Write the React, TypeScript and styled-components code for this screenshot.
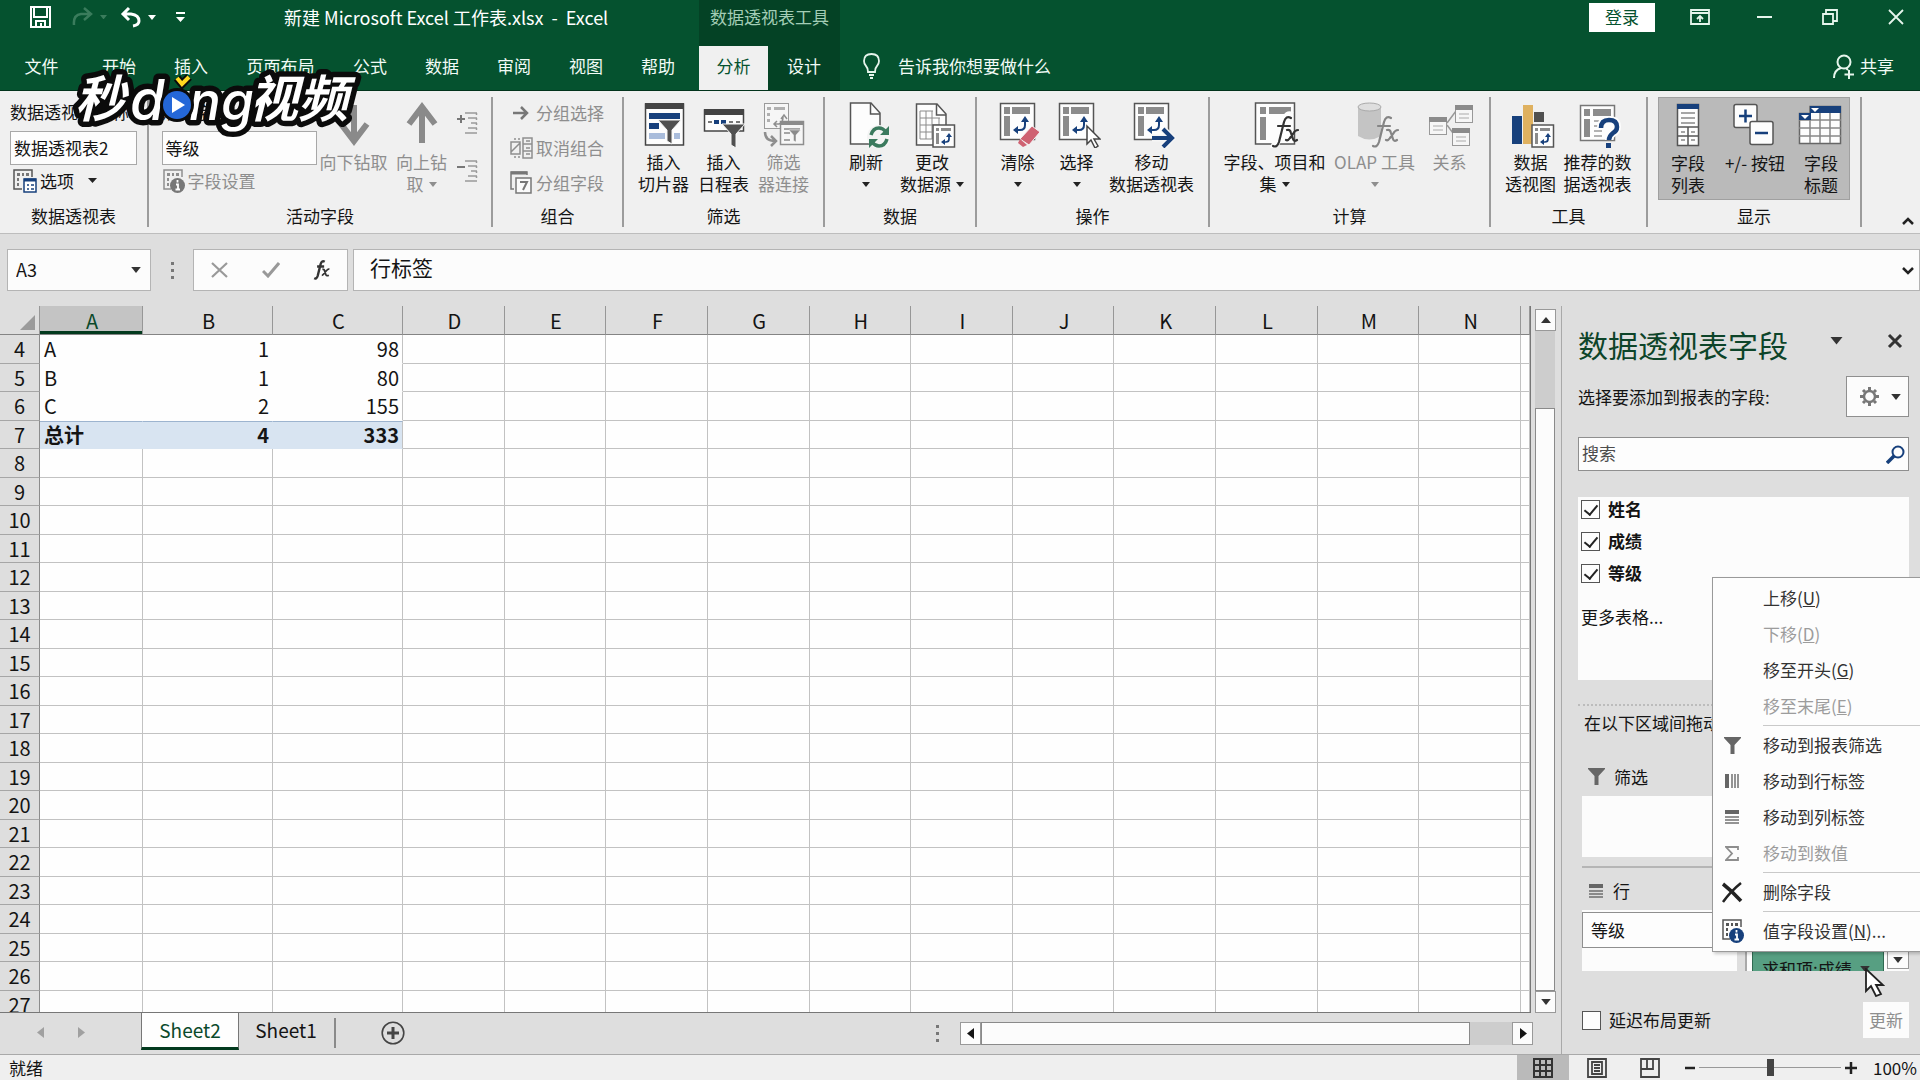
import React from "react";
import styled, { createGlobalStyle, css } from "styled-components";

const GREEN = "#05522f";
const BLUE = "#17407c";
const INK = "#141414";
const MUTED = "#8e8e8e";

const Global = createGlobalStyle`
  * { box-sizing: border-box; }
  body { margin: 0; overflow: hidden; }
  body, button, input, table {
    font-family: "Noto Sans CJK SC", "Noto Sans", sans-serif;
    font-size: 17px;
    line-height: 22px;
    color: ${INK};
  }
  button { background: none; border: 0; padding: 0; margin: 0; white-space: nowrap; }
  input { margin: 0; min-width: 0; }
  svg { display: block; flex: none; }
`;

const Page = styled.div`
  height: 100vh;
  display: flex;
  flex-direction: column;
  background: #dedede;
  position: relative;
  overflow: hidden;
`;

/* ---------- title bar and tabs ---------- */

const Header = styled.header`
  background: ${GREEN};
  color: #f2fbf6;
  border-bottom: 1px solid #02331c;
  flex: none;
`;

const HeaderRow = styled.div<{ $h: number }>`
  display: grid;
  grid-template-columns: 699px 141px 1fr;
  height: ${(p) => p.$h}px;
`;

const QuickBar = styled.div`
  display: flex;
  align-items: center;
  height: 34px;
  padding-left: 30px;
`;

const QuickButton = styled.button<{ $w: number }>`
  width: ${(p) => p.$w}px;
  display: flex;
  align-items: center;
  gap: 7px;
`;

const DocTitle = styled.h1`
  margin: 0 0 0 88px;
  font-size: 18px;
  font-weight: 400;
  white-space: pre;
  color: #fff;
`;

const ContextTitle = styled.div`
  background: #044225;
  color: #a3cdb6;
  text-align: center;
  line-height: 34px;
`;

const WindowButtons = styled.div`
  display: flex;
  align-items: center;
  justify-content: flex-end;
  height: 34px;
`;

const SignIn = styled.button`
  width: 66px;
  height: 29px;
  background: #fff;
  color: ${GREEN};
  margin-right: 12px;
`;

const WinButton = styled.button`
  width: 65px;
  height: 34px;
  display: flex;
  align-items: center;
  justify-content: center;
  &:last-child {
    width: 58px;
    padding-left: 10px;
  }
`;

const Tabs = styled.nav`
  display: flex;
`;

const Tab = styled.button<{ $w?: number; $active?: boolean }>`
  width: ${(p) => p.$w ?? 72}px;
  height: 100%;
  padding-bottom: 4px;
  color: #f2fbf6;
  ${(p) => p.$active && css`
    background: #f0f0f0;
    color: ${GREEN};
  `}
`;

const ContextTabs = styled(Tabs)`
  background: #044225;
`;

const TabsRight = styled.div`
  display: flex;
  align-items: center;
  justify-content: space-between;
  padding: 0 26px 4px 23px;
`;

const IconTextButton = styled.button<{ $gap: number }>`
  display: flex;
  align-items: center;
  gap: ${(p) => p.$gap}px;
  color: #f2fbf6;
`;

/* ---------- ribbon ---------- */

const Ribbon = styled.div`
  flex: none;
  display: flex;
  height: 143px;
  padding: 6px 0;
  background: #f0f0f0;
  border-bottom: 1px solid #bdbdbd;
`;

const Group = styled.section<{ $w: number }>`
  width: ${(p) => p.$w}px;
  flex: none;
  display: flex;
  flex-direction: column;
  align-items: center;
  border-right: 2px solid #9c9c9c;
`;

const GroupBody = styled.div<{ $indent?: number }>`
  height: 108px;
  padding-left: ${(p) => p.$indent ?? 0}px;
  display: flex;
`;

const GroupName = styled.h2`
  margin: 0;
  font-size: 17px;
  font-weight: 400;
  line-height: 22px;
`;

const BigButton = styled.button<{ $w: number; $disabled?: boolean }>`
  width: ${(p) => p.$w}px;
  height: 102px;
  padding-top: 5px;
  display: flex;
  flex-direction: column;
  align-items: center;
  justify-content: flex-start;
  color: ${(p) => (p.$disabled ? MUTED : INK)};
  svg.glyph { margin-bottom: 3px; }
`;

const LabelLine = styled.span`
  height: 22px;
  display: flex;
  align-items: center;
  gap: 5px;
`;

const Stack = styled.div<{ $w: number }>`
  width: ${(p) => p.$w}px;
  display: flex;
  flex-direction: column;
`;

const FieldLabel = styled.label`
  height: 34px;
  line-height: 30px;
  white-space: nowrap;
`;

const FieldInput = styled.input`
  width: 100%;
  height: 34px;
  border: 1px solid #a8a8a8;
  background: #fdfdfd;
  padding: 0 3px 2px;
`;

const SmallButton = styled.button<{ $disabled?: boolean }>`
  height: 35px;
  padding-bottom: 4px;
  display: flex;
  align-items: center;
  gap: 3px;
  color: ${(p) => (p.$disabled ? MUTED : INK)};
`;

const OutlineStack = styled(Stack)`
  padding-top: 15px;
  gap: 26px;
  margin-left: 4px;
`;

const ToggleBox = styled.div`
  display: flex;
  height: 103px;
  width: 192px;
  background: #bababa;
  border: 1px solid #a0a0a0;
`;

const CollapseRibbon = styled.div`
  flex: 1;
  display: flex;
  align-items: flex-end;
  justify-content: flex-end;
  padding: 0 5px 2px 0;
`;

/* ---------- formula bar ---------- */

const FormulaBar = styled.div`
  flex: none;
  display: flex;
  align-items: flex-start;
  padding: 15px 0 0 7px;
  height: 72px;
`;

const Box = styled.div<{ $w?: number }>`
  height: 42px;
  ${(p) => (p.$w ? `width: ${p.$w}px; flex: none;` : "flex: 1; margin-left: 5px;")}
  display: flex;
  align-items: center;
  background: #fcfcfc;
  border: 1px solid #b4b4b4;
`;

const NameInput = styled.input`
  flex: 1;
  border: 0;
  background: none;
  padding: 0 8px 2px;
  font-size: 18px;
`;

const BarButton = styled.button`
  flex: 1;
  display: flex;
  justify-content: center;
`;

const FormulaInput = styled(NameInput)`
  padding: 0 16px 6px;
  font-size: 21px;
  line-height: 28px;
`;

const DropButton = styled.button`
  width: 28px;
  height: 100%;
  display: flex;
  align-items: center;
  justify-content: center;
`;

const ExpandButton = styled(DropButton)`
  width: 22px;
`;

const Grip = styled.span<{ $w: number; $h: number }>`
  width: ${(p) => p.$w}px;
  height: ${(p) => p.$h}px;
  flex: none;
  display: flex;
  flex-direction: column;
  align-items: center;
  justify-content: center;
  gap: 4px;
  i { width: 3px; height: 3px; background: #777; }
`;

/* ---------- sheet ---------- */

const Main = styled.main`
  flex: 1;
  min-height: 0;
  display: flex;
`;

const SheetArea = styled.section`
  flex: 1;
  min-width: 0;
  display: flex;
  flex-direction: column;
`;

const SheetTop = styled.div`
  flex: 1;
  min-height: 0;
  display: flex;
`;

const GridFrame = styled.div`
  flex: 1;
  min-width: 0;
  overflow: hidden;
  border-bottom: 1px solid #777;
`;

const Sheet = styled.table`
  width: 100%;
  table-layout: fixed;
  border-spacing: 0;
  border-collapse: separate;
  th, td { padding: 0; font-size: 20px; line-height: 26px; }
`;

const ColHead = styled.th<{ $selected?: boolean }>`
  height: 29px;
  font-weight: 400;
  border-right: 1px solid #979797;
  border-bottom: 1px solid #848484;
  && { padding: 2px 0 0 2px; }
  ${(p) => p.$selected && css`
    background: #c4c4c4;
    color: #0b4a2b;
    box-shadow: inset 0 -3px 0 #033a1e;
  `}
`;

const Corner = styled.th`
  border-right: 1px solid #979797;
  border-bottom: 1px solid #848484;
  svg { margin: 4px 0 0 20px; }
`;

const Row = styled.tr<{ $tall: boolean }>`
  height: ${(p) => (p.$tall ? 29 : 28)}px;
`;

const RowHead = styled.th`
  font-weight: 400;
  border-right: 1px solid #8c8c8c;
  border-bottom: 1px solid #a6a6a6;
`;

const Cell = styled.td<{ $plain?: boolean; $total?: boolean; $num?: boolean; $edge?: boolean }>`
  background: #fefefe;
  border-right: 1px solid ${(p) => ((p.$plain || p.$total) && !p.$edge ? "transparent" : "#c2c2c2")};
  border-bottom: 1px solid ${(p) => (p.$plain || p.$total ? "transparent" : "#c2c2c2")};
  text-align: ${(p) => (p.$num ? "right" : "left")};
  && { padding: 0 3px 0 4px; }
  ${(p) => p.$total && css`
    background: #d8e4f1;
    border-top: 1px solid #9db4cf;
    font-weight: 700;
  `}
`;

const VScroll = styled.div`
  width: 31px;
  flex: none;
  display: flex;
  flex-direction: column;
  padding: 3px 6px 0 4px;
  border-left: 1px solid #777;
`;

const ScrollButton = styled.button<{ $w: number; $h: number }>`
  flex: none;
  width: ${(p) => p.$w}px;
  height: ${(p) => p.$h}px;
  background: #fcfcfc;
  border: 1px solid #999;
  display: flex;
  align-items: center;
  justify-content: center;
`;

const Track = styled.div<{ $size: number }>`
  flex: 0 0 ${(p) => p.$size}px;
  background: #cdcdcd;
`;

const Thumb = styled.div`
  flex: 1;
  background: #fcfcfc;
  border: 1px solid #8a8a8a;
`;

const SheetTabs = styled.div`
  flex: none;
  height: 41px;
  display: flex;
  align-items: flex-start;
`;

const SheetNav = styled.div`
  width: 141px;
  height: 38px;
  padding-left: 37px;
  display: flex;
  align-items: center;
  gap: 32px;
`;

const SheetTab = styled.button<{ $active?: boolean }>`
  font-size: 19px;
  height: 37px;
  padding-bottom: ${(p) => (p.$active ? 0 : 3)}px;
  width: ${(p) => (p.$active ? 98 : 94)}px;
  ${(p) => p.$active && css`
    background: #fefefe;
    color: #0b4a2b;
    border: 1px solid #777;
    border-top: 0;
    border-bottom: 3px solid #033a1e;
  `}
`;

const TabDivider = styled.i`
  width: 2px;
  height: 30px;
  margin: 5px 45px 0 1px;
  background: #8a8a8a;
`;

const AddSheet = styled.button`
  height: 40px;
`;

const HScroll = styled.div`
  margin-left: auto;
  display: flex;
  width: 647px;
  height: 40px;
  padding: 9px 28px 8px 0;
`;

/* ---------- field panel ---------- */

const Panel = styled.aside`
  width: 359px;
  flex: none;
  position: relative;
  padding: 0 11px 0 16px;
  border-left: 1px solid #a9a9a9;
  display: flex;
  flex-direction: column;
`;

const PanelHead = styled.div`
  height: 70px;
  display: flex;
  align-items: center;
  padding-top: 6px;
`;

const PanelTitle = styled.h2`
  margin: 0;
  flex: 1;
  font-size: 30px;
  line-height: 40px;
  font-weight: 400;
  color: #0d4429;
`;

const PanelIconButton = styled.button<{ $mr: number }>`
  margin-right: ${(p) => p.$mr}px;
  margin-bottom: 6px;
`;

const Choose = styled.div`
  display: flex;
  align-items: center;
  justify-content: space-between;
  height: 41px;
`;

const GearButton = styled.button`
  width: 63px;
  height: 41px;
  padding-left: 6px;
  background: #fcfcfc;
  border: 1px solid #8f8f8f;
  display: flex;
  align-items: center;
  justify-content: center;
  gap: 12px;
`;

const Search = styled.div`
  margin-top: 20px;
  height: 34px;
  border: 1px solid #8f8f8f;
  background: #fdfdfd;
  display: flex;
  align-items: center;
  padding-right: 3px;
  input {
    flex: 1;
    border: 0;
    background: none;
    padding: 0 3px 2px;
    &::placeholder { color: #4c4c4c; opacity: 1; }
  }
`;

const FieldList = styled.div`
  margin-top: 26px;
  height: 183px;
  background: #fcfcfc;
  padding: 0 3px;
`;

const CheckLabel = styled.label<{ $bold?: boolean }>`
  display: flex;
  align-items: center;
  gap: 8px;
  height: ${(p) => (p.$bold ? 32 : 36)}px;
  padding-bottom: ${(p) => (p.$bold ? 8 : 0)}px;
  font-weight: ${(p) => (p.$bold ? 700 : 400)};
`;

const Check = styled.input`
  appearance: none;
  width: 19px;
  height: 19px;
  border: 1px solid #555;
  background: #fdfdfd;
  display: flex;
  justify-content: center;
  &:checked::after {
    content: "";
    width: 6px;
    height: 11px;
    margin-top: 1px;
    border: solid #222;
    border-width: 0 2px 2px 0;
    transform: rotate(40deg);
  }
`;

const MoreTables = styled.a`
  display: block;
  margin-top: 13px;
  color: ${INK};
  text-decoration: none;
`;

const DragHint = styled.p`
  margin: 24px 0 0;
  padding: 6px 6px 0;
  border-top: 2px dotted #bcbcbc;
`;

const Areas = styled.div`
  margin: 27px 0 0 4px;
  display: grid;
  grid-template-columns: 155px 1fr;
  column-gap: 8px;
`;

const AreaTitle = styled.h3`
  margin: 0;
  height: 35px;
  display: flex;
  align-items: center;
  gap: 9px;
  padding-left: 6px;
  font-size: 17px;
  font-weight: 400;
  padding-bottom: 4px;
`;

const AreaBox = styled.div`
  height: 61px;
  background: #fcfcfc;
  overflow: hidden;
`;

const AreaRule = styled.hr`
  grid-column: 1 / -1;
  width: 100%;
  height: 2px;
  margin: 9px 0 7px;
  border: 0;
  background: #b5b5b5;
`;

const ValueBox = styled(AreaBox)`
  border-left: 2px solid #a9a9a9;
  padding: 41px 0 0 5px;
  display: flex;
  justify-content: space-between;
`;

const RowItem = styled.button`
  width: 100%;
  height: 36px;
  margin-top: 2px;
  padding: 0 8px;
  border: 1px solid #8f8f8f;
  background: #fdfdfd;
  display: flex;
  align-items: center;
  justify-content: space-between;
`;

const ValueItem = styled.button`
  width: 132px;
  height: 38px;
  padding: 0 13px 2px 9px;
  flex: none;
  background: #579f82;
  border: 1px solid #2f6a51;
  display: flex;
  align-items: center;
  justify-content: space-between;
`;

const PanelFoot = styled.div`
  margin-top: 31px;
  padding-left: 4px;
  display: flex;
  align-items: center;
  justify-content: space-between;
`;

const UpdateButton = styled.button`
  width: 46px;
  height: 36px;
  background: #fcfcfc;
  color: ${MUTED};
`;

const Menu = styled.div`
  position: absolute;
  right: 0;
  bottom: 102px;
  width: 208px;
  padding: 2px 0;
  background: #fdfdfd;
  border: 1px solid #9a9a9a;
  border-right: 0;
  box-shadow: 2px 2px 3px rgba(0, 0, 0, 0.2);
`;

const MenuItem = styled.button<{ $disabled?: boolean }>`
  width: 100%;
  height: 36px;
  display: grid;
  grid-template-columns: 38px 1fr;
  column-gap: 12px;
  align-items: center;
  text-align: left;
  color: ${(p) => (p.$disabled ? "#9c9c9c" : "#333")};
  svg { justify-self: center; }
`;

const MenuRule = styled.hr`
  height: 1px;
  margin: 1px 0 1px 50px;
  border: 0;
  background: #c9c9c9;
`;

const Pointer = styled.svg`
  position: absolute;
  right: 35px;
  bottom: 57px;
`;

/* ---------- status bar ---------- */

const Status = styled.footer`
  flex: none;
  height: 26px;
  display: flex;
  align-items: center;
  padding-left: 9px;
  background: #efefef;
  border-top: 1px solid #a9a9a9;
`;

const StatusText = styled.span`
  flex: 1;
`;

const ViewButton = styled.button<{ $on?: boolean; $w: number }>`
  width: ${(p) => p.$w}px;
  height: 26px;
  display: flex;
  align-items: center;
  justify-content: center;
  background: ${(p) => (p.$on ? "#bababa" : "none")};
`;

const Zoom = styled.div`
  display: flex;
  align-items: center;
  width: 235px;
  gap: 4px;
  margin-left: 10px;
`;

const Slider = styled.input`
  appearance: none;
  width: 142px;
  height: 20px;
  background: linear-gradient(#999, #999) center / 100% 1px no-repeat;
  &::-webkit-slider-thumb {
    appearance: none;
    width: 7px;
    height: 17px;
    background: #444;
  }
`;

const ZoomValue = styled.span`
  margin-left: 12px;
`;

const Watermark = styled.svg`
  position: absolute;
  left: 60px;
  top: 64px;
`;

/* ---------- drawings ---------- */

const Down = ({ s = 8, c = "#333" }: { s?: number; c?: string }) => (
  <svg width={s} height={s / 2 + 1} viewBox="0 0 8 5"><path d="M0 0H8L4 5Z" fill={c} /></svg>
);

const Glyph = ({ children }: { children: React.ReactNode }) => (
  <svg className="glyph" width="48" height="46" viewBox="0 0 48 46" fill="none">{children}</svg>
);

const PivotPage = () => (
  <>
    <rect x="6.5" y="1.5" width="34" height="36" fill="#fdfdfd" stroke="#555" strokeWidth="1.5" />
    <path d="M10 5h6v7h-6zM18 5h18v7H18zM10 14h6v20h-6z" fill="#8b8b8b" />
    <path d="M31 18v5q0 5-5 5h-4" stroke={BLUE} strokeWidth="2" />
    <path d="M27 20l4-6 4 6zM24 24v8l-5-4z" fill={BLUE} />
  </>
);

const MiniPivot = () => (
  <>
    <rect x="25" y="23" width="21.5" height="22" fill="#fdfdfd" stroke="#555" strokeWidth="1.5" />
    <path d="M28 26h3v3h-3zM33 26h10v3H33zM28 31h3v11h-3z" fill="#8b8b8b" />
    <path d="M41 34v3q0 3-3 3h-2" stroke={BLUE} strokeWidth="1.7" />
    <path d="M38 35l3-4 3 4zM37 37v6l-4-3z" fill={BLUE} />
  </>
);

const Funnel = ({ x, y, k = 1, c = "#505050" }: { x: number; y: number; k?: number; c?: string }) => (
  <path transform={`translate(${x} ${y}) scale(${k})`} d="M0 0H23L14 10V24L9 21V10Z" fill={c} stroke="#f5f5f5" />
);

const Fx = ({ c }: { c: string }) => (
  <path
    d="M40 16q-5-3-7 4l-5 20q-2 6-6 4M27 24h12M36 28q3-1 4 3l2 6q1 3 4 1M47 28q-3 0-5 4l-3 4q-2 3-4 2"
    stroke={c}
    strokeWidth="2.2"
    strokeLinecap="round"
  />
);

const Info = ({ c, o }: { c: string; o: string }) => (
  <svg width="23" height="24" viewBox="0 0 23 24" fill="none">
    <path d="M9 20H2V1h18v7" stroke={o} strokeWidth="1.5" />
    <path d="M5 4h3v3H5zM10 4h2v3h-2zM14 4h3v3h-3zM5 9h2v3H5zM5 14h2v3H5z" fill={o} />
    <circle cx="15.500" cy="16.500" r="7.500" fill={c} />
    <path d="M15.500 11v2.500M14 15.500h2v5M13.500 20.500h4.500" stroke="#fff" strokeWidth="1.800" />
  </svg>
);

const Lines = ({ turn, c = "#666" }: { turn?: boolean; c?: string }) => (
  <svg width="16" height="16" viewBox="0 0 16 16">
    <g transform={turn ? "rotate(-90 8 8)" : undefined} fill={c}>
      <path d="M1 1h14v4H1z" />
      <path d="M1 7h14v2H1zM1 10h14v2H1zM1 13h14v2H1z" opacity=".7" />
    </g>
  </svg>
);

const SmallFunnel = () => (
  <svg width="17" height="17" viewBox="0 0 17 17"><path d="M0 0H17V1L10.500 8V17H6.500V8L0 1Z" fill="#666" /></svg>
);

const Rel = ({ x, y }: { x: number; y: number }) => (
  <g transform={`translate(${x} ${y})`}>
    <rect x=".5" y=".5" width="17" height="17" fill="#f6f6f6" stroke="#999" />
    <path d="M0 0h18v5H0z" fill="#8b8b8b" />
    <path d="M4 9h10M4 13h10" stroke="#aaa" />
  </g>
);

const Outline = ({ plus }: { plus?: boolean }) => (
  <svg width="22" height="22" viewBox="0 0 22 22" stroke="#999" strokeWidth="1.500" fill="none">
    <path d={plus ? "M0 7h8M4 3v8" : "M0 7h8"} stroke="#777" strokeWidth="2" />
    <path d="M8 1h12M11 6h9M14 11h6M11 16h9M8 21h12" />
    <path d="M19.500 1v20" strokeDasharray="2 3" />
  </svg>
);

const BigArrow = ({ down }: { down?: boolean }) => (
  <Glyph>
    <g transform={down ? "rotate(180 24 22)" : undefined}>
      <path d="M24 41V6M11 22L24 5l13 17" stroke="#8a8a8a" strokeWidth="6" />
    </g>
  </Glyph>
);

const Logo = () => {
  const ink = {
    fill: "#fff",
    stroke: "#0b0b0b",
    strokeWidth: 11,
    strokeLinejoin: "round" as const,
    paintOrder: "stroke",
    fontStyle: "italic",
  };
  const han = { ...ink, fontFamily: '"Noto Sans CJK SC", sans-serif', fontWeight: 700, fontSize: 50 };
  const latin = { ...ink, fontFamily: "Inter, sans-serif", fontWeight: 500 };
  return (
    <Watermark width="310" height="84" viewBox="0 0 310 84" aria-hidden="true">
      <text x="15" y="53" {...han}>秒</text>
      <text x="188" y="53" {...han}>视频</text>
      <text x="70" y="56" fontSize="56" {...latin}>d</text>
      <text x="129" y="56" fontSize="53" {...latin}>ng</text>
      <circle cx="117" cy="41" r="17" fill="#0b0b0b" />
      <circle cx="117" cy="41" r="14" fill="#2467d8" />
      <path d="M112 33v16l13-8z" fill="#fff" />
      <path d="M117 14l5 6 7-7" fill="none" stroke="#0b0b0b" strokeWidth="8" />
      <path d="M117 14l5 6 7-7" fill="none" stroke="#ffd91f" strokeWidth="4" />
    </Watermark>
  );
};

/* ---------- data ---------- */

const COLUMNS = "ABCDEFGHIJKLMN".split("");
const DATA: Record<number, string[]> = {
  4: ["A", "1", "98"],
  5: ["B", "1", "80"],
  6: ["C", "2", "155"],
  7: ["总计", "4", "333"],
};
const ROWS = Array.from({ length: 24 }, (_, i) => i + 4);

type BigProps = { w: number; lines: string[]; drop?: boolean; off?: boolean; icon: React.ReactNode };
const Big = ({ w, lines, drop, off, icon }: BigProps) => (
  <BigButton $w={w} $disabled={off} type="button">
    {icon}
    {lines.map((t, i) => (
      <LabelLine key={i}>
        {t}
        {drop && i === lines.length - 1 && <Down c={off ? MUTED : "#222"} />}
      </LabelLine>
    ))}
  </BigButton>
);

const RibbonBar = () => (
  <Ribbon>
    <Group $w={149}>
      <GroupBody>
        <Stack $w={127}>
          <FieldLabel htmlFor="pivotName">数据透视表名称:</FieldLabel>
          <FieldInput id="pivotName" defaultValue="数据透视表2" />
          <SmallButton type="button">
            <svg width="27" height="24" viewBox="-3 0 27 24" fill="none">
              <path d="M9 20H1V1h18v7" stroke="#555" strokeWidth="1.500" />
              <path d="M4 4h3v3H4zM9 4h2v3H9zM13 4h3v3h-3zM4 9h2v3H4zM4 14h2v3H4z" fill="#777" />
              <rect x="11" y="10" width="12" height="13" fill="#fff" stroke={BLUE} strokeWidth="1.500" />
              <path d="M11 11h12" stroke={BLUE} strokeWidth="3" />
              <path d="M14 16h2M18 16h3M14 20h2M18 20h3" stroke={BLUE} strokeWidth="1.500" />
            </svg>
            选项
            <svg width="20" height="6" viewBox="0 0 20 6"><path d="M11 0h9l-4.500 5z" fill="#222" /></svg>
          </SmallButton>
        </Stack>
      </GroupBody>
      <GroupName>数据透视表</GroupName>
    </Group>

    <Group $w={344}>
      <GroupBody>
        <Stack $w={155}>
          <FieldLabel htmlFor="activeField">活动字段:</FieldLabel>
          <FieldInput id="activeField" defaultValue="等级" />
          <SmallButton type="button" $disabled>
            <Info c="#777" o="#8e8e8e" />
            字段设置
          </SmallButton>
        </Stack>
        <Big w={74} off lines={["向下钻取"]} icon={<BigArrow down />} />
        <Big w={62} off drop lines={["向上钻", "取"]} icon={<BigArrow />} />
        <OutlineStack $w={22}>
          <Outline plus />
          <Outline />
        </OutlineStack>
      </GroupBody>
      <GroupName>活动字段</GroupName>
    </Group>

    <Group $w={131}>
      <GroupBody>
        <Stack $w={95}>
          <SmallButton type="button" $disabled>
            <svg width="23" height="22" viewBox="0 0 23 22" fill="none"><path d="M3 11h14M11 5l6 6-6 6" stroke="#777" strokeWidth="2.500" /></svg>
            分组选择
          </SmallButton>
          <SmallButton type="button" $disabled>
            <svg width="23" height="22" viewBox="0 0 23 22" fill="none" stroke="#8e8e8e" strokeWidth="1.500">
              <path d="M1 5h9v12H1zM1 15L10 6" /><path d="M13 1h9v20h-9zM13 7h9M13 14h9M16 4h4M16 11h4M16 17h4" /><path d="M4 2h6M4 20h6" strokeDasharray="2 2" />
            </svg>
            取消组合
          </SmallButton>
          <SmallButton type="button" $disabled>
            <svg width="23" height="23" viewBox="0 0 23 23" fill="none" stroke="#777" strokeWidth="1.500">
              <path d="M4 18H1V1h16v3" /><path d="M1 2h16" strokeWidth="3" /><path d="M6 7h15v15H6z" fill="#fafafa" /><path d="M10 11h7l-4 8" strokeWidth="2" />
            </svg>
            分组字段
          </SmallButton>
        </Stack>
      </GroupBody>
      <GroupName>组合</GroupName>
    </Group>

    <Group $w={201}>
      <GroupBody>
        <Big w={60} lines={["插入", "切片器"]} icon={
          <Glyph>
            <rect x="5.500" y="2" width="38" height="41" fill="#fdfdfd" stroke="#444" strokeWidth="1.500" />
            <path d="M5 1h39v6H5z" fill="#444" />
            <path d="M9 11h31v6H9zM9 21h10v6H9z" fill={BLUE} />
            <path d="M9 31h16v6H9zM34 31h6v6h-6z" fill="#a9bcdb" />
            <Funnel x={18} y={18} />
          </Glyph>
        } />
        <Big w={60} lines={["插入", "日程表"]} icon={
          <Glyph>
            <rect x="4.500" y="8" width="39" height="21" fill="#fdfdfd" stroke="#444" strokeWidth="1.500" />
            <path d="M4 7h40v6H4z" fill="#444" />
            <path d="M14 18h5v4h-5zM21 18h5v4h-5z" fill={BLUE} />
            <path d="M8 20h4M29 20h4M36 20h4" stroke="#777" strokeWidth="2" />
            <Funnel x={22} y={22} />
          </Glyph>
        } />
        <Big w={60} off lines={["筛选", "器连接"]} icon={
          <Glyph>
            <rect x="4.500" y="1.500" width="24" height="25" fill="#f6f6f6" stroke="#9a9a9a" />
            <path d="M7 5h4v3H7zM14 5h11v3H14zM7 11h3v3H7zM7 17h3v3H7z" fill="#b0b0b0" />
            <path d="M14 22h5q4-1 4-7M21 17l3-4 3 4M17 19l-3 3 3 3" stroke="#8e8e8e" strokeWidth="1.500" />
            <rect x="20.500" y="19.500" width="23" height="23" fill="#f6f6f6" stroke="#8e8e8e" strokeWidth="1.500" />
            <path d="M20 19h24v4H20z" fill="#8b8b8b" />
            <path d="M24 27h16M24 31h6M24 38h6" stroke="#a5a5a5" strokeWidth="2" />
            <Funnel x={29} y={28} k={0.5} c="#8b8b8b" />
            <path d="M5 30q0 9 10 9M11 34l5 5-5 5" stroke="#8e8e8e" strokeWidth="2.500" />
          </Glyph>
        } />
      </GroupBody>
      <GroupName>筛选</GroupName>
    </Group>

    <Group $w={152}>
      <GroupBody $indent={8}>
        <Big w={56} drop lines={["刷新", ""]} icon={
          <Glyph>
            <path d="M8.500 1H29L38 11V42H8.500Z" fill="#fdfdfd" stroke="#555" strokeWidth="1.500" />
            <path d="M28.500 1v11H38" stroke="#555" strokeWidth="1.500" />
            <circle cx="37" cy="35" r="12" fill="#f4f4f4" />
            <path d="M29 33q2-7 8-7 4 0 7 4M45 37q-2 7-8 7-4 0-7-4" stroke="#3b7a5e" strokeWidth="3.500" />
            <path d="M47 24v9h-9zM27 46v-9h9z" fill="#3b7a5e" />
          </Glyph>
        } />
        <Big w={76} drop lines={["更改", "数据源"]} icon={
          <Glyph>
            <path d="M8.500 2H29L38 12V43H8.500Z" fill="#fdfdfd" stroke="#555" strokeWidth="1.500" />
            <path d="M28.500 2v11H38" stroke="#555" strokeWidth="1.500" />
            <path d="M12 9h13M12 16h20M12 23h20M12 30h12M12 37h12M12 9v28M18 9v28M24 9v28M31 16v8" stroke="#8b8b8b" />
            <MiniPivot />
          </Glyph>
        } />
      </GroupBody>
      <GroupName>数据</GroupName>
    </Group>

    <Group $w={233}>
      <GroupBody>
        <Big w={60} drop lines={["清除", ""]} icon={
          <Glyph>
            <PivotPage />
            <path d="M38 24l8 6-11 13-9-6z" fill="#cf6272" stroke="#f5f5f5" />
            <path d="M26 37l7 6-4 2-5-4z" fill="#cf6272" />
          </Glyph>
        } />
        <Big w={58} drop lines={["选择", ""]} icon={
          <Glyph>
            <PivotPage />
            <path d="M34 24v18l4-4 4 8 3-2-4-7h6z" fill="#fff" stroke="#444" strokeWidth="1.500" />
          </Glyph>
        } />
        <Big w={92} lines={["移动", "数据透视表"]} icon={
          <Glyph>
            <PivotPage />
            <path d="M24 36h20M35 27l9 9-9 9" stroke="#f5f5f5" strokeWidth="7" />
            <path d="M24 36h20M35 27l9 9-9 9" stroke={BLUE} strokeWidth="4" />
          </Glyph>
        } />
      </GroupBody>
      <GroupName>操作</GroupName>
    </Group>

    <Group $w={281}>
      <GroupBody>
        <Big w={112} drop lines={["字段、项目和", "集"]} icon={
          <Glyph>
            <rect x="4.500" y="1" width="39" height="41" fill="#fdfdfd" stroke="#555" strokeWidth="1.500" />
            <path d="M9 5h6v7H9zM18 5h22v7H18zM9 15h6v23H9z" fill="#8b8b8b" />
            <path d="M41 13q-5-3-8 5l-6 21q-2 6-7 4" stroke="#fdfdfd" strokeWidth="6" />
            <Fx c="#333" />
          </Glyph>
        } />
        <Big w={88} off drop lines={["OLAP 工具", ""]} icon={
          <Glyph>
            <path d="M7 5v29q11 7 23 0V5z" fill="#c4c4c4" />
            <ellipse cx="18.500" cy="5" rx="11.500" ry="4" fill="#dedede" stroke="#aaa" />
            <Fx c="#858585" />
          </Glyph>
        } />
        <Big w={62} off lines={["关系"]} icon={
          <Glyph>
            <path d="M21 21L30 9M21 23l6 8" stroke="#999" strokeWidth="1.500" />
            <Rel x={3} y={15} /><Rel x={29} y={3} /><Rel x={26} y={26} />
          </Glyph>
        } />
      </GroupBody>
      <GroupName>计算</GroupName>
    </Group>

    <Group $w={157}>
      <GroupBody>
        <Big w={58} lines={["数据", "透视图"]} icon={
          <Glyph>
            <path d="M5 14h10v28H5z" fill={BLUE} />
            <path d="M16 3h10v39H16z" fill="#dfb160" />
            <path d="M27 10h10v10H27z" fill="#505050" />
            <MiniPivot />
          </Glyph>
        } />
        <Big w={76} lines={["推荐的数", "据透视表"]} icon={
          <Glyph>
            <rect x="6.500" y="3.500" width="34" height="35" fill="#fdfdfd" stroke="#777" strokeWidth="1.500" />
            <path d="M10 7h6v7h-6zM19 7h18v7H19zM10 17h6v18h-6z" fill="#8b8b8b" />
            <path d="M20 19h9M20 24h6M20 29h8M20 34h8" stroke="#999" strokeWidth="1.500" />
            <path d="M27 26q0-8 8-8t8 7q0 4-4 6-4 3-4 7" stroke="#fdfdfd" strokeWidth="8" />
            <path d="M27 26q0-8 8-8t8 7q0 4-4 6-4 3-4 7" stroke={BLUE} strokeWidth="4.500" />
            <path d="M32 41h5v5h-5z" fill={BLUE} />
          </Glyph>
        } />
      </GroupBody>
      <GroupName>工具</GroupName>
    </Group>

    <Group $w={214}>
      <GroupBody>
        <ToggleBox>
          <Big w={58} lines={["字段", "列表"]} icon={
            <Glyph>
              <rect x="13.500" y="1.500" width="21" height="41" fill="#fdfdfd" stroke="#555" strokeWidth="1.500" />
              <path d="M13 1h22v5H13z" fill={BLUE} />
              <path d="M17 10h14M17 15h14M17 20h14M17 29h4M27 29h4M17 37h4M27 37h4" stroke="#888" strokeWidth="1.500" />
              <path d="M13 24h22M13 33h22M24 24v18" stroke="#555" strokeWidth="1.500" />
            </Glyph>
          } />
          <Big w={76} lines={["+/- 按钮"]} icon={
            <Glyph>
              <rect x="3" y="1.500" width="23" height="23" rx="2" fill="#fdfdfd" stroke="#555" strokeWidth="1.500" />
              <path d="M8 13h13M14.500 6.500v13" stroke={BLUE} strokeWidth="2.500" />
              <rect x="19" y="18.500" width="23" height="23" rx="2" fill="#fdfdfd" stroke="#555" strokeWidth="1.500" />
              <path d="M24 30h13" stroke={BLUE} strokeWidth="2.500" />
            </Glyph>
          } />
          <Big w={56} lines={["字段", "标题"]} icon={
            <Glyph>
              <path d="M2.500 10.500H13V3.500H43.500V40.500H2.500Z" fill="#fdfdfd" stroke="#666" strokeWidth="1.500" />
              <path d="M2 17h42M2 25h42M2 33h42M13 10v30M23 10v30M33 10v30" stroke="#888" strokeWidth="1.500" />
              <path d="M2 10h12v7H2zM13 3h31v7H13z" fill={BLUE} />
              <path d="M4 12h8l-4 4zM14 5h8l-4 4z" fill="#fff" />
            </Glyph>
          } />
        </ToggleBox>
      </GroupBody>
      <GroupName>显示</GroupName>
    </Group>
    <CollapseRibbon>
      <button type="button" aria-label="折叠功能区">
        <svg width="14" height="9" viewBox="0 0 14 9" fill="none"><path d="M2 8l5-5 5 5" stroke="#222" strokeWidth="2.500" /></svg>
      </button>
    </CollapseRibbon>
  </Ribbon>
);

const Top = () => (
  <Header>
    <HeaderRow $h={46}>
      <QuickBar>
        <QuickButton $w={42} type="button" aria-label="保存">
          <svg width="21" height="22" viewBox="0 0 21 22" fill="none" stroke="#fff" strokeWidth="2"><path d="M1 1h19v20H1zM4 1v10h13V1" /><path d="M6 21v-6h9v6" /><path d="M11 17v4" /></svg>
        </QuickButton>
        <QuickButton $w={48} type="button" aria-label="恢复">
          <svg width="21" height="22" viewBox="0 0 21 22" fill="none" stroke="#3a7c5c" strokeWidth="2.500"><path d="M12 2l7 6-7 6M19 8H9Q1 9 2 19" /></svg>
          <Down s={7} c="#3a7c5c" />
        </QuickButton>
        <QuickButton $w={56} type="button" aria-label="撤消">
          <svg width="21" height="22" viewBox="0 0 21 22" fill="none" stroke="#fff" strokeWidth="3"><path d="M9 2L3 8l6 6M3 8h8q8 1 8 7 0 4-6 5" /></svg>
          <Down c="#fff" />
        </QuickButton>
        <QuickButton $w={20} type="button" aria-label="自定义快速访问工具栏">
          <svg width="9" height="10" viewBox="0 0 9 10"><path d="M0 0h9v2H0zM0 5h9L4.500 10z" fill="#fff" /></svg>
        </QuickButton>
        <DocTitle>新建 Microsoft Excel 工作表.xlsx  -  Excel</DocTitle>
      </QuickBar>
      <ContextTitle>数据透视表工具</ContextTitle>
      <WindowButtons>
        <SignIn type="button">登录</SignIn>
        <WinButton type="button" aria-label="功能区显示选项">
          <svg width="20" height="16" viewBox="0 0 20 16" fill="none" stroke="#e6f5ec" strokeWidth="1.800"><path d="M1 1h18v14H1zM1 4h18M10 13V7M7 10l3-3 3 3" /></svg>
        </WinButton>
        <WinButton type="button" aria-label="最小化">
          <svg width="15" height="4" viewBox="0 0 15 4"><path d="M0 2h15" stroke="#e6f5ec" strokeWidth="2" /></svg>
        </WinButton>
        <WinButton type="button" aria-label="还原">
          <svg width="16" height="16" viewBox="0 0 16 16" fill="none" stroke="#e6f5ec" strokeWidth="1.800"><path d="M1 5h10v10H1zM4 5V1h11v11h-4" /></svg>
        </WinButton>
        <WinButton type="button" aria-label="关闭">
          <svg width="16" height="16" viewBox="0 0 16 16"><path d="M1 1l14 14M15 1L1 15" stroke="#e6f5ec" strokeWidth="1.800" /></svg>
        </WinButton>
      </WindowButtons>
    </HeaderRow>
    <HeaderRow $h={44}>
      <Tabs>
        <Tab $w={83} type="button">文件</Tab>
        <Tab type="button">开始</Tab>
        <Tab type="button">插入</Tab>
        <Tab $w={107} type="button">页面布局</Tab>
        {["公式", "数据", "审阅", "视图", "帮助"].map((t) => <Tab key={t} type="button">{t}</Tab>)}
      </Tabs>
      <ContextTabs>
        <Tab $w={69} $active type="button">分析</Tab>
        <Tab type="button">设计</Tab>
      </ContextTabs>
      <TabsRight>
        <IconTextButton $gap={18} type="button">
          <svg width="17" height="26" viewBox="0 0 17 26" fill="none" stroke="#e6f5ec" strokeWidth="1.800"><path d="M5 19q0-4-2-6-2-2-2-5 0-7 7.500-7T16 8q0 3-2 5-2 2-2 6zM6 22h5M7 25h3" /></svg>
          告诉我你想要做什么
        </IconTextButton>
        <IconTextButton $gap={5} type="button">
          <svg width="22" height="25" viewBox="0 0 22 25" fill="none" stroke="#e6f5ec" strokeWidth="2"><circle cx="11" cy="8" r="6.500" /><path d="M1 24q0-8 7-10M13 14l2 2M16 16v9M11.500 20.500h9.500" /></svg>
          共享
        </IconTextButton>
      </TabsRight>
    </HeaderRow>
  </Header>
);

const Formula = () => (
  <FormulaBar>
    <Box $w={144}>
      <NameInput aria-label="名称框" defaultValue="A3" />
      <DropButton type="button" aria-label="名称列表"><Down s={10} /></DropButton>
    </Box>
    <Grip $w={42} $h={42}><i /><i /><i /></Grip>
    <Box $w={155}>
      <BarButton type="button" aria-label="取消"><svg width="17" height="16" viewBox="0 0 17 16"><path d="M1 1l15 14M16 1L1 15" stroke="#999" strokeWidth="2.200" /></svg></BarButton>
      <BarButton type="button" aria-label="输入"><svg width="18" height="16" viewBox="0 0 18 16"><path d="M1 9l5 5L17 1" fill="none" stroke="#999" strokeWidth="3" /></svg></BarButton>
      <BarButton type="button" aria-label="插入函数">
        <svg width="17" height="20" viewBox="20 13 29 34" fill="none">
          <path d="M40 16q-5-3-7 4l-5 20q-2 6-6 4M27 24h12" stroke="#333" strokeWidth="4" />
          <path d="M36 29q3-1 4 3l2 6q1 3 5 1M48 28q-3 0-6 4l-3 4q-2 3-4 3" stroke="#333" strokeWidth="3" />
        </svg>
      </BarButton>
    </Box>
    <Box>
      <FormulaInput aria-label="编辑栏" defaultValue="行标签" />
      <ExpandButton type="button" aria-label="展开编辑栏">
        <svg width="12" height="9" viewBox="0 0 12 9" fill="none"><path d="M1 2l5 5 5-5" stroke="#222" strokeWidth="2.500" /></svg>
      </ExpandButton>
    </Box>
  </FormulaBar>
);

const GridTable = () => (
  <Sheet>
    <colgroup>
      <col width="40" /><col width="103" /><col width="130" /><col width="130" />
      {COLUMNS.slice(3).map((c) => <col key={c} />)}
      <col width="9" />
    </colgroup>
    <thead>
      <tr>
        <Corner><svg width="15" height="15" viewBox="0 0 15 15"><path d="M15 0v15H0z" fill="#9b9b9b" /></svg></Corner>
        {COLUMNS.map((c) => <ColHead key={c} $selected={c === "A"}>{c}</ColHead>)}
        <ColHead />
      </tr>
    </thead>
    <tbody>
      {ROWS.map((r) => (
        <Row key={r} $tall={r % 2 === 0}>
          <RowHead>{r}</RowHead>
          {[...COLUMNS, ""].map((c, i) => {
            const inside = r <= 7 && i < 3;
            return (
              <Cell key={c} $plain={inside && r < 7} $total={inside && r === 7} $num={i > 0} $edge={i === 2}>
                {inside ? DATA[r][i] : null}
              </Cell>
            );
          })}
        </Row>
      ))}
    </tbody>
  </Sheet>
);

const Side = ({ left, c = "#141414" }: { left?: boolean; c?: string }) => (
  <svg width="8" height="11" viewBox="0 0 8 11"><path d={left ? "M7 0v11L0 5.500z" : "M1 0v11l7-5.500z"} fill={c} /></svg>
);

const Key = ({ t, k, dots }: { t: string; k: string; dots?: boolean }) => (
  <span>{t}(<u>{k}</u>){dots && "..."}</span>
);

const FieldPanel = () => (
  <Panel>
    <PanelHead>
      <PanelTitle>数据透视表字段</PanelTitle>
      <PanelIconButton $mr={44} type="button" aria-label="任务窗格选项"><Down s={13} /></PanelIconButton>
      <PanelIconButton $mr={6} type="button" aria-label="关闭窗格">
        <svg width="16" height="16" viewBox="0 0 16 16"><path d="M2 2l12 12M14 2L2 14" stroke="#333" strokeWidth="3" /></svg>
      </PanelIconButton>
    </PanelHead>
    <Choose>
      <span>选择要添加到报表的字段:</span>
      <GearButton type="button" aria-label="工具">
        <svg width="19" height="19" viewBox="0 0 19 19" fill="none" stroke="#777">
          <circle cx="9.500" cy="9.500" r="5.500" strokeWidth="2.500" />
          <path d="M9.500 0v3M9.500 16v3M0 9.500h3M16 9.500h3M3 3l2 2M14 14l2 2M16 3l-2 2M5 14l-2 2" strokeWidth="3" />
        </svg>
        <Down s={10} />
      </GearButton>
    </Choose>
    <Search>
      <input type="text" aria-label="搜索字段" placeholder="搜索" />
      <svg width="19" height="19" viewBox="0 0 19 19" fill="none" stroke={BLUE}><circle cx="12" cy="7" r="5.500" strokeWidth="2" /><path d="M8 11l-7 7" strokeWidth="3.500" /></svg>
    </Search>
    <FieldList>
      {["姓名", "成绩", "等级"].map((f) => (
        <CheckLabel key={f} $bold><Check type="checkbox" defaultChecked />{f}</CheckLabel>
      ))}
      <MoreTables href="#more">更多表格...</MoreTables>
    </FieldList>
    <DragHint>在以下区域间拖动字段:</DragHint>
    <Areas>
      <AreaTitle><SmallFunnel />筛选</AreaTitle><span />
      <AreaBox /><AreaBox />
      <AreaRule />
      <AreaTitle><Lines />行</AreaTitle><span />
      <AreaBox><RowItem type="button">等级<Down s={8} /></RowItem></AreaBox>
      <ValueBox>
        <ValueItem type="button">求和项:成绩<Down s={10} /></ValueItem>
        <ScrollButton $w={22} $h={18} type="button" aria-label="向下滚动"><Down s={10} /></ScrollButton>
      </ValueBox>
    </Areas>
    <PanelFoot>
      <CheckLabel><Check type="checkbox" />延迟布局更新</CheckLabel>
      <UpdateButton type="button">更新</UpdateButton>
    </PanelFoot>
    <Menu role="menu">
      <MenuItem role="menuitem"><span /><Key t="上移" k="U" /></MenuItem>
      <MenuItem role="menuitem" $disabled><span /><Key t="下移" k="D" /></MenuItem>
      <MenuItem role="menuitem"><span /><Key t="移至开头" k="G" /></MenuItem>
      <MenuItem role="menuitem" $disabled><span /><Key t="移至末尾" k="E" /></MenuItem>
      <MenuRule />
      <MenuItem role="menuitem"><SmallFunnel />移动到报表筛选</MenuItem>
      <MenuItem role="menuitem"><Lines turn />移动到行标签</MenuItem>
      <MenuItem role="menuitem"><Lines />移动到列标签</MenuItem>
      <MenuItem role="menuitem" $disabled>
        <svg width="14" height="15" viewBox="0 0 14 15" fill="none" stroke="#8e8e8e" strokeWidth="1.800"><path d="M13 4V1H1l6 6.500L1 14h12v-3" /></svg>
        移动到数值
      </MenuItem>
      <MenuRule />
      <MenuItem role="menuitem">
        <svg width="22" height="21" viewBox="0 0 22 21" fill="none" stroke="#222"><path d="M2 2q9 7 18 17" strokeWidth="3.500" /><path d="M20 1Q10 9 2 20" strokeWidth="2.500" /></svg>
        删除字段
      </MenuItem>
      <MenuRule />
      <MenuItem role="menuitem"><Info c={BLUE} o="#555" /><Key t="值字段设置" k="N" dots /></MenuItem>
    </Menu>
    <Pointer width="20" height="29" viewBox="0 0 20 29"><path d="M1 1v22l5-5 5 10 5-2-5-9h7z" fill="#fff" stroke="#222" strokeWidth="1.800" /></Pointer>
  </Panel>
);

export default function App() {
  return (
    <Page>
      <Global />
      <Top />
      <RibbonBar />
      <Formula />
      <Main>
        <SheetArea>
          <SheetTop>
            <GridFrame><GridTable /></GridFrame>
            <VScroll>
              <ScrollButton $w={21} $h={22} type="button" aria-label="向上滚动">
                <svg width="10" height="6" viewBox="0 0 10 6"><path d="M0 6h10L5 0z" fill="#333" /></svg>
              </ScrollButton>
              <Track $size={77} />
              <Thumb />
              <ScrollButton $w={21} $h={22} type="button" aria-label="向下滚动"><Down s={10} /></ScrollButton>
            </VScroll>
          </SheetTop>
          <SheetTabs>
            <SheetNav>
              <button type="button" aria-label="上一个工作表"><Side left c="#a0a0a0" /></button>
              <button type="button" aria-label="下一个工作表"><Side c="#a0a0a0" /></button>
            </SheetNav>
            <SheetTab $active type="button">Sheet2</SheetTab>
            <SheetTab type="button">Sheet1</SheetTab>
            <TabDivider />
            <AddSheet type="button" aria-label="新工作表">
              <svg width="24" height="24" viewBox="0 0 24 24" fill="none" stroke="#444"><circle cx="12" cy="12" r="10.800" strokeWidth="1.600" /><path d="M12 6v12M6 12h12" strokeWidth="3" /></svg>
            </AddSheet>
            <HScroll>
              <Grip $w={46} $h={23}><i /><i /><i /></Grip>
              <ScrollButton $w={21} $h={23} type="button" aria-label="向左滚动"><Side left /></ScrollButton>
              <Thumb />
              <Track $size={42} />
              <ScrollButton $w={21} $h={23} type="button" aria-label="向右滚动"><Side /></ScrollButton>
            </HScroll>
          </SheetTabs>
        </SheetArea>
        <FieldPanel />
      </Main>
      <Status>
        <StatusText>就绪</StatusText>
        <ViewButton $w={52} $on type="button" aria-label="普通">
          <svg width="20" height="20" viewBox="0 0 20 20" fill="none" stroke="#333" strokeWidth="2"><path d="M1 1h18v18H1zM7 1v18M13 1v18M1 7h18M1 13h18" /></svg>
        </ViewButton>
        <ViewButton $w={56} type="button" aria-label="页面布局">
          <svg width="20" height="20" viewBox="0 0 20 20" fill="none" stroke="#444" strokeWidth="1.800"><path d="M1 1h18v18H1zM5 4h10v12H5zM7 7h6M7 10h6M7 13h6" /></svg>
        </ViewButton>
        <ViewButton $w={50} type="button" aria-label="分页预览">
          <svg width="20" height="20" viewBox="0 0 20 20" fill="none" stroke="#444" strokeWidth="1.800"><path d="M1 1h18v18H1zM7 1v10h6V1M1 11h6" /></svg>
        </ViewButton>
        <Zoom>
          <button type="button" aria-label="缩小"><svg width="10" height="12" viewBox="0 0 10 12"><path d="M0 6h10" stroke="#222" strokeWidth="2.500" /></svg></button>
          <Slider type="range" min="10" max="190" defaultValue="100" aria-label="显示比例" />
          <button type="button" aria-label="放大"><svg width="12" height="12" viewBox="0 0 12 12"><path d="M0 6h12M6 0v12" stroke="#222" strokeWidth="2.500" /></svg></button>
          <ZoomValue>100%</ZoomValue>
        </Zoom>
      </Status>
      <Logo />
    </Page>
  );
}
